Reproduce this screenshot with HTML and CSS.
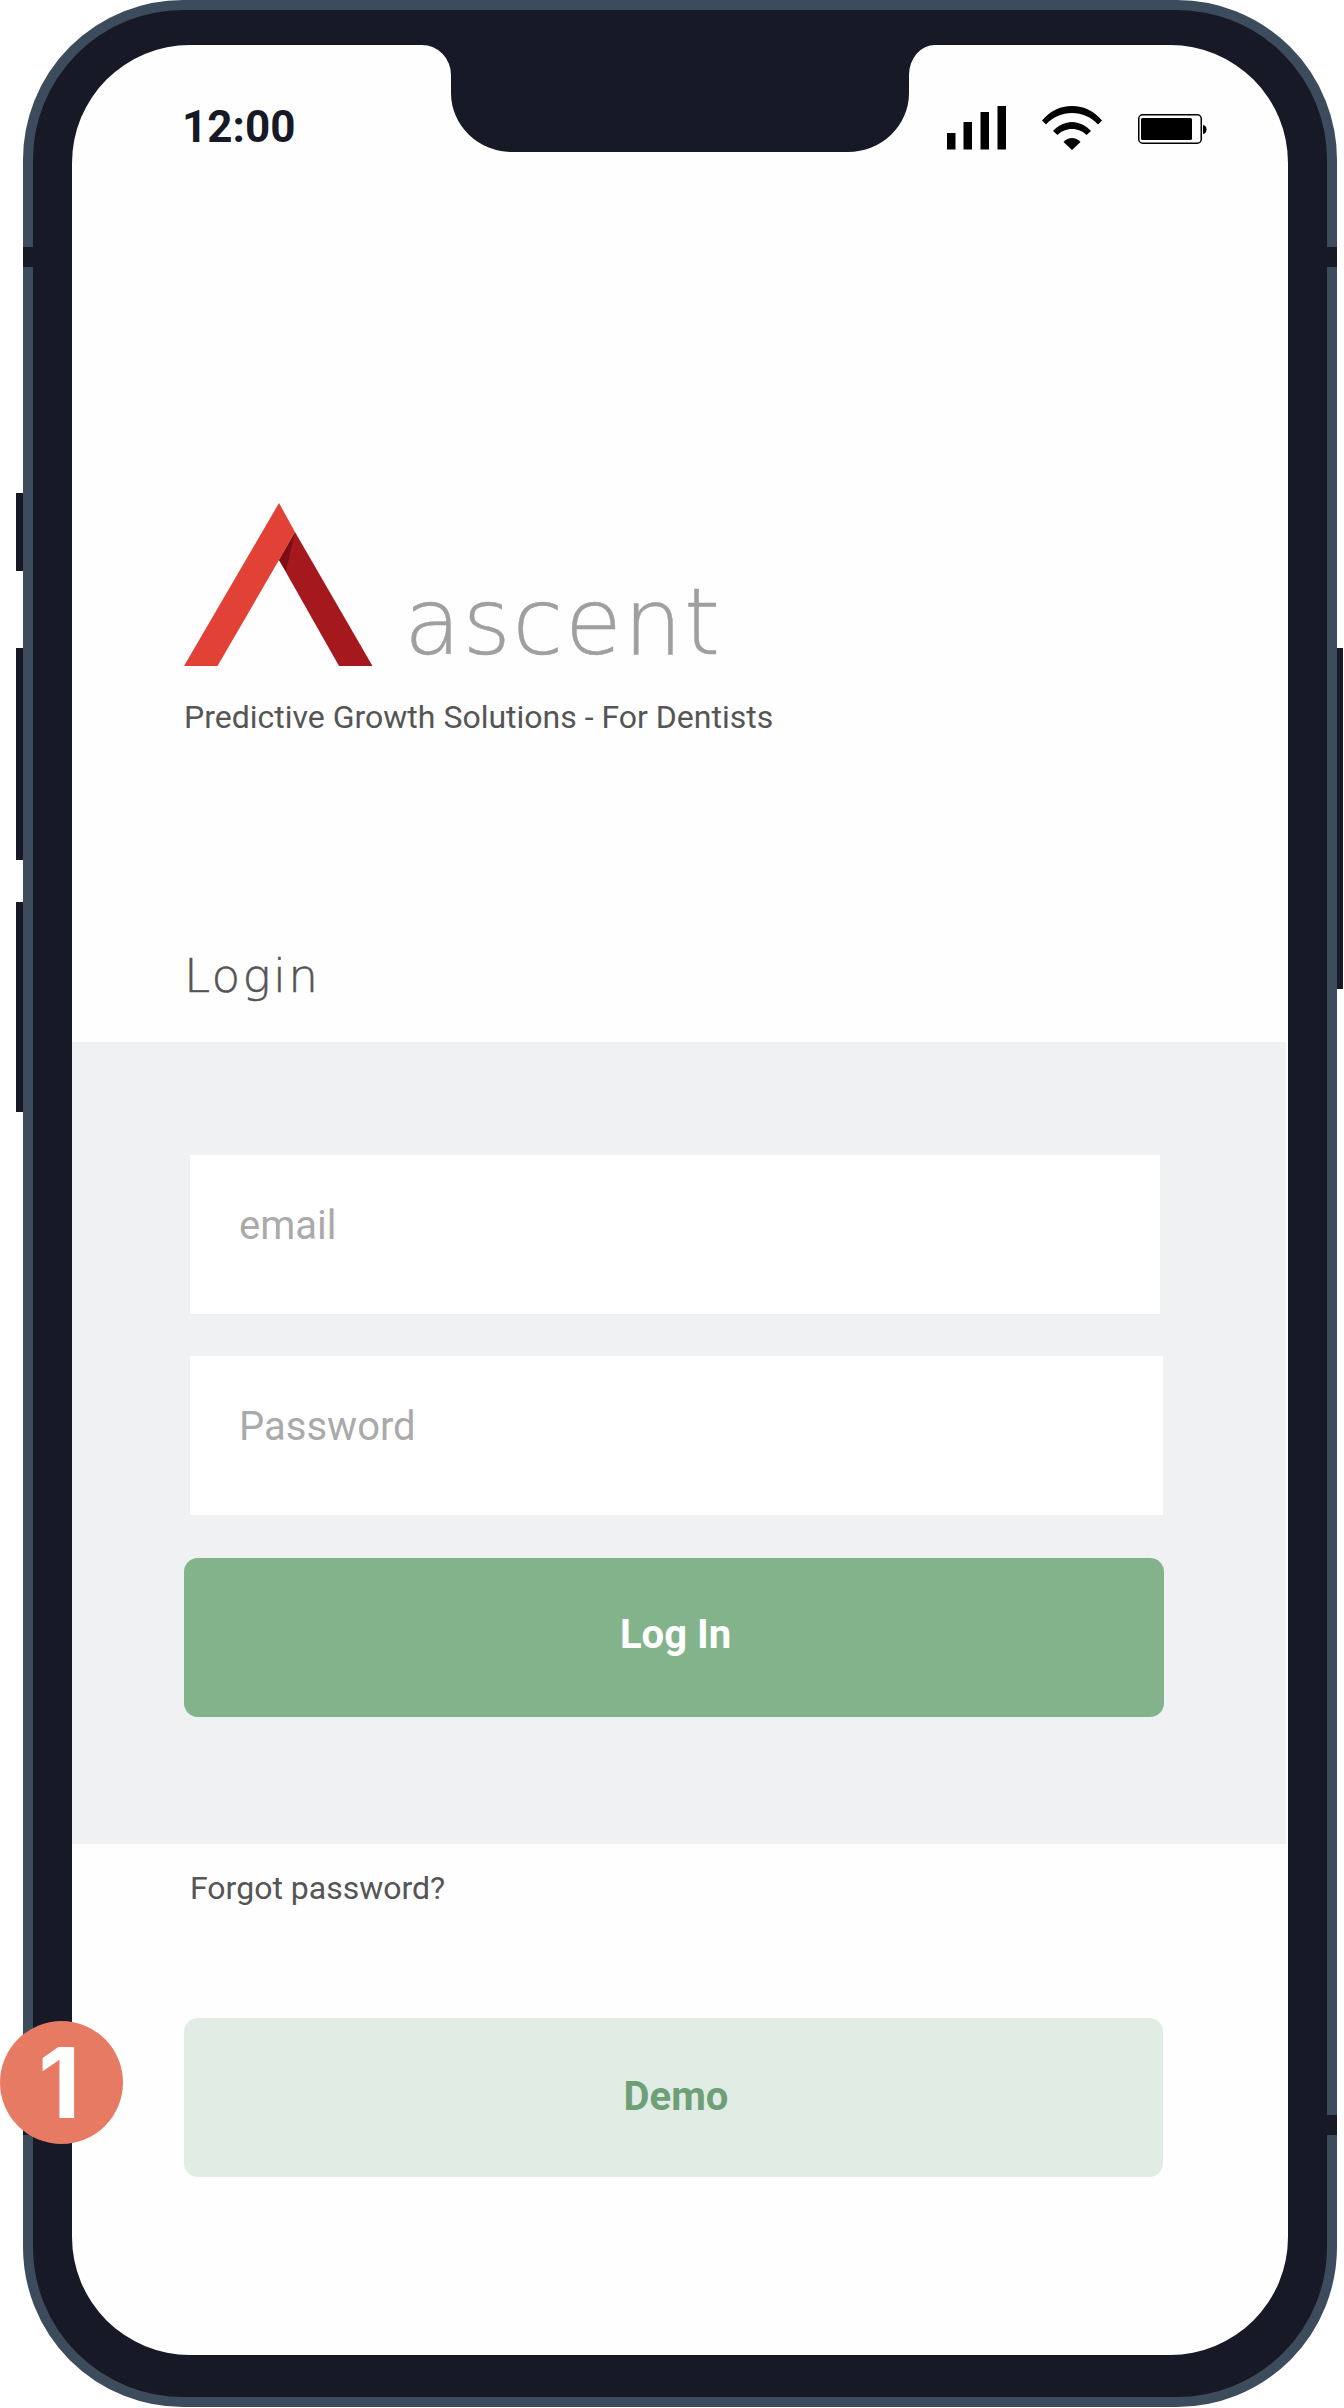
FILE: index.html
```html
<!DOCTYPE html>
<html>
<head>
<meta charset="utf-8">
<title>Ascent login</title>
<link rel="stylesheet" href="styles.css">
</head>
<body>
<div class="phone">
  <span class="tick tick-tl"></span>
  <span class="tick tick-tr"></span>
  <span class="tick tick-bl"></span>
  <span class="tick tick-br"></span>
  <span class="key key-mute"></span>
  <span class="key key-up"></span>
  <span class="key key-down"></span>
  <span class="key key-power"></span>

  <div class="screen">
    <svg class="notch" width="513" height="107" viewBox="0 0 513 107">
      <path fill="#171a26" d="M0 0H513A26 30 0 0 0 487 30V48A61 59 0 0 1 426 107H90A61 59 0 0 1 29 48V30A29 30 0 0 0 0 0Z"/>
    </svg>

    <div class="status">
      <span class="time">12:00</span>
      <div class="status-icons">
        <svg class="signal" width="60" height="44" viewBox="0 0 60 44">
          <rect x="0" y="27" width="8.5" height="16.500"/>
          <rect x="16.500" y="16" width="8.500" height="27.500"/>
          <rect x="33.500" y="6" width="8.500" height="37.500"/>
          <rect x="50.500" y="0" width="8.500" height="43.500"/>
        </svg>
        <svg class="wifi" width="60" height="44" viewBox="0 0 60 44">
          <path d="M0 14.500C8 5 18 0 30 0S52 5 60 14.500L56 18.500C49 11 40 7 30 7S11 11 4 18.500Z"/>
          <path d="M11 25C16 19.500 23 16 30 16S44 19.500 49 25L44.500 29C41 25.500 36 23 30 23S19 25.500 15.500 29Z"/>
          <path d="M21.500 36C24 33.500 27 32 30 32S36 33.500 38.500 36L30 44Z"/>
        </svg>
        <svg class="battery" width="69" height="30" viewBox="0 0 69 30">
          <rect x="0.750" y="0.750" width="62.500" height="28.500" rx="4" fill="none" stroke="#000" stroke-width="1.500"/>
          <rect x="3" y="4" width="51" height="22" rx="1.500"/>
          <path d="M65 11C67.500 11.500 68.500 13 68.500 15.500S67.500 19.500 65 20Z"/>
        </svg>
      </div>
    </div>

    <div class="brand">
      <div class="logo">
        <svg width="190" height="165" viewBox="0 0 190 165">
          <path fill="#a5181e" d="M111 30L188.500 164H155L95 58Z"/>
          <path fill="#7b0f15" d="M111 30L95 58L102 69Z"/>
          <path fill="#e24236" d="M95 1L111 30L95 58L33.500 164H0Z"/>
        </svg>
        <span class="wordmark">ascent</span>
      </div>
      <p class="tagline">Predictive Growth Solutions - For Dentists</p>
    </div>

    <h1 class="login-title">Login</h1>

    <div class="panel">
      <div class="field field-email">email</div>
      <div class="field field-pass">Password</div>
      <div class="btn btn-login">Log In</div>
    </div>

    <a class="forgot">Forgot password?</a>
    <div class="btn btn-demo">Demo</div>
  </div>

  <div class="badge">1</div>
</div>
</body>
</html>
```

FILE: styles.css
```css
html, body { margin: 0; padding: 0; background: #fff; }
body { font-family: Roboto, "Liberation Sans", sans-serif; }

.phone {
  position: relative;
  box-sizing: border-box;
  width: 1314px;
  height: 2407px;
  margin-left: 23px;
  padding: 35px 39px 32px 39px;
  background: #171a26;
  border: 10px solid #3d4c5c;
  border-radius: 160px;
}

/* little antenna lines on the rim */
.tick { position: absolute; width: 10px; height: 20px; background: #171a26; }
.tick-tl { left: -10px; top: 237px; }
.tick-tr { right: -10px; top: 237px; }
.tick-bl { left: -10px; top: 2105px; }
.tick-br { right: -10px; top: 2105px; }

/* side keys */
.key { position: absolute; width: 7px; background: #171a26; }
.key-mute { left: -17px; top: 483px; height: 78px; }
.key-up { left: -17px; top: 638px; height: 212px; }
.key-down { left: -17px; top: 892px; height: 210px; }
.key-power { right: -16px; width: 6px; top: 638px; height: 341px; }

.screen {
  position: relative;
  box-sizing: border-box;
  height: 2310px;
  background: #fefefe;
  border-radius: 118px;
  display: flex;
  flex-direction: column;
}

.notch { position: absolute; left: 350px; top: 0; }

.status {
  display: flex;
  justify-content: space-between;
  align-items: flex-start;
  height: 105px;
  padding: 60px 81px 0 110px;
  box-sizing: border-box;
}
.time { font-size: 44px; font-weight: 700; line-height: 44px; color: #171a26; }
.status-icons { display: flex; align-items: flex-start; margin-top: 1px; }
.signal { display: block; }
.wifi { display: block; margin-left: 35px; }
.battery { display: block; margin-left: 36px; margin-top: 8px; }

.brand { padding: 352px 0 0 112px; }
.logo { display: flex; align-items: flex-start; }
.logo svg { display: block; }
.wordmark {
  margin-left: 30px;
  margin-top: 64px;
  font-family: "DejaVu Sans", sans-serif;
  font-weight: 200;
  font-size: 93px;
  line-height: 112px;
  letter-spacing: 1.4px;
  -webkit-text-stroke: 0.4px #9f9f9f;
  color: #9f9f9f;
}
.tagline {
  margin: 21px 0 0 0;
  font-size: 32px;
  line-height: 36px;
  color: #555;
}

.login-title {
  margin: 213px 0 0 112px;
  height: 62px;
  font-family: "DejaVu Sans", sans-serif;
  font-weight: 200;
  font-size: 47px;
  line-height: 56px;
  letter-spacing: 2.2px;
  -webkit-text-stroke: 0.5px #555;
  color: #555;
}

.panel {
  box-sizing: border-box;
  margin: 32px 2px 0 0;
  height: 802px;
  padding: 113px 122px 0 112px;
  background: #f0f1f3;
  display: flex;
  flex-direction: column;
}

.field {
  box-sizing: border-box;
  height: 159px;
  padding: 47px 0 0 49px;
  background: #fff;
  font-size: 40px;
  line-height: 48px;
  color: #aaa;
}
.field-email { margin: 0 4px 0 6px; }
.field-pass { margin: 42px 1px 0 6px; }

.btn {
  box-sizing: border-box;
  height: 159px;
  padding-left: 3px;
  border-radius: 14px;
  display: flex;
  align-items: center;
  justify-content: center;
  font-size: 40px;
  font-weight: 700;
}
.btn-login { margin-top: 43px; padding-bottom: 7px; background: #83b38b; color: #fff; }
.btn-demo { margin: 0 125px 0 112px; padding: 0 0 2px 5px; background: #e1ede4; color: #6da077; }

.forgot {
  display: block;
  margin: 26px 0 112px 118px;
  font-size: 32px;
  line-height: 36px;
  color: #555;
}

.badge {
  position: absolute;
  left: -33px;
  top: 2011px;
  width: 123px;
  height: 123px;
  border-radius: 50%;
  background: #e67a63;
  color: #fff;
  font-family: Inter, sans-serif;
  font-weight: 700;
  font-size: 98px;
  line-height: 123px;
  text-align: center;
  text-indent: -4px;
}
```
